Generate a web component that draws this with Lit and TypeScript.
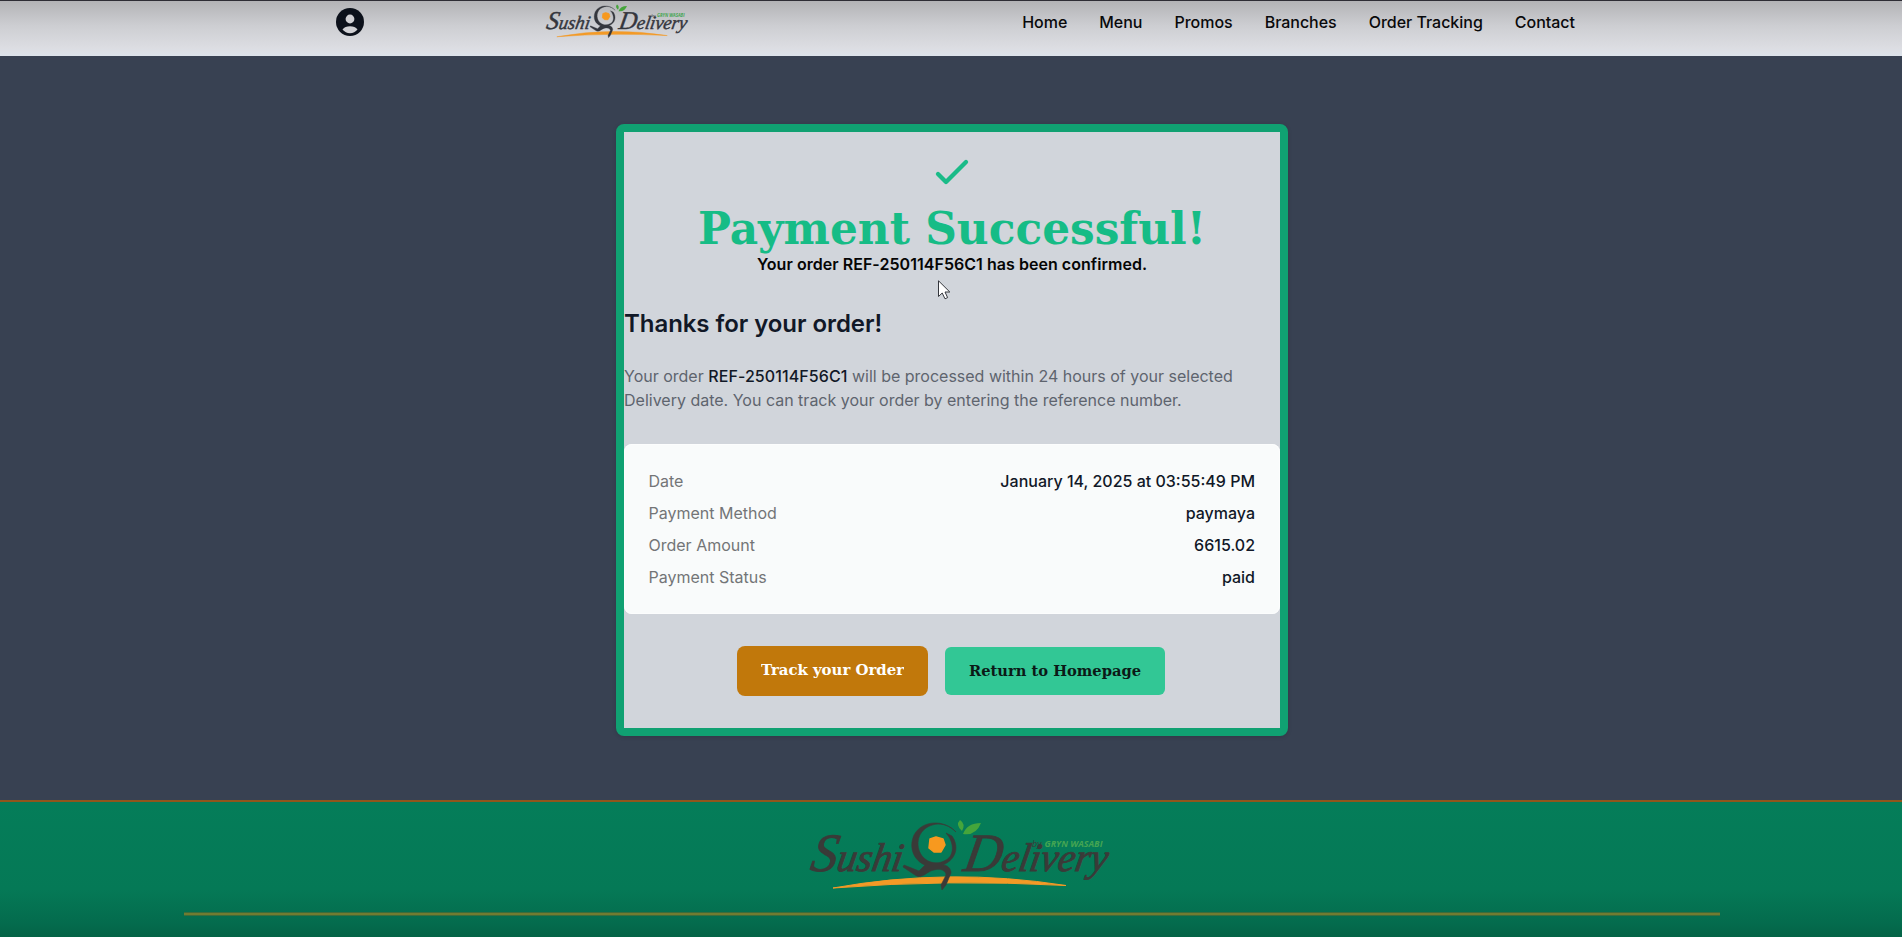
import { LitElement, html, css, svg } from "lit";
import { customElement, property } from "lit/decorators.js";

@customElement("sushi-logo")
class SushiLogo extends LitElement {
  @property() ink = "#3a3a38";
  static styles = css`
    :host { display: block; }
    svg { display: block; width: 100%; height: 100%; overflow: visible; }
    .script { font-family: "Liberation Serif", serif; font-style: italic; font-weight: 400; }
    .by { font-family: "Open Sans", sans-serif; font-style: italic; }
    .brand { font-weight: 700; }
  `;
  render() {
    return html`<svg viewBox="0 0 304 76">
      <path d="M24 67 Q140 46 257 64.500 Q140 58 24 67Z" fill="#f39a26" stroke="#f39a26" stroke-width="1"/>
      ${svg`<g fill=${this.ink} stroke=${this.ink}>
        <g transform="translate(0 50) skewX(-10)" stroke-width=".9">
          <text class="script" x="0" y="0" textLength="92" lengthAdjust="spacingAndGlyphs"><tspan font-size="54">S</tspan><tspan font-size="40">ushi</tspan></text>
          <text class="script" x="153" y="0" textLength="144" lengthAdjust="spacingAndGlyphs"><tspan font-size="54">D</tspan><tspan font-size="40">elivery</tspan></text>
        </g>
        <path d="M147 11 C135 -2 113 -1 105 14 C99 28 106 40 116 44 L110 50 L95 44 L94 46 L106 54 C113 59 118 50 125 49 C132 47 137 50 137 54 L132 64 L133 69 L137 64 L142 52 C142 47 138 44 134 44 C148 38 150 25 143 15 L137 12 C146 22 145 35 137 39 C125 46 113 39 110 29 C106 15 115 4 129 3 C137 3 143 7 147 11Z" stroke-width=".6"/>
      </g>`}
      <path d="M121 18 L127 16 L134 18 L136 24 L132 31 L125 31 L120 27Z" fill="#f7991f" stroke="#f7991f" stroke-width="1.5" stroke-linejoin="round"/>
      <path d="M153 10 Q146 4 151 -1 Q157 3 153 10Z M154 13 Q158 2 172 2 Q167 15 154 13Z" fill="#45a53b"/>
      <text class="by" x="223" y="25.5" font-size="9" fill=${this.ink}>by</text>
      <text class="by brand" x="235.500" y="25.500" font-size="9.300" fill="#44a552" textLength="58" lengthAdjust="spacingAndGlyphs">GRYN WASABI</text>
    </svg>`;
  }
}

@customElement("app-root")
class AppRoot extends LitElement {
  static styles = css`
    :host { display: flex; flex-direction: column; height: 937px; overflow: hidden; position: relative; background: #384152; font: 400 16px/24px Inter, sans-serif; color: #111827; }
    * { box-sizing: border-box; }
    header { height: 56px; flex: none; border-top: 1px solid #2e2d35; background: linear-gradient(#b3b3b6, #cdced2 45%, #dcdde2 85%, #dde3eb); display: flex; padding: 0 327px 0 336px; align-items: flex-start; }
    .user { width: 28px; height: 28px; margin-top: 7px; }
    .small { width: 145px; height: 36px; margin: 4px 0 0 181px; }
    nav { margin: 9px 0 0 auto; display: flex; gap: 32px; font-weight: 500; letter-spacing: -.02px; color: #09090b; white-space: nowrap; }
    main { height: 744px; flex: none; padding: 68px 0 0 616px; }
    .card { width: 672px; height: 612px; border: 8px solid #10a172; border-radius: 8px; background: #d1d5db; display: flex; flex-direction: column; box-shadow: 0 1px 4px #0002; }
    .check { width: 48px; height: 48px; margin: 16px auto 0; display: block; }
    h1 { margin: 8px 0 0; height: 48px; font: 700 45px/48px "DejaVu Serif Condensed", "DejaVu Serif", serif; color: #16bc86; text-align: center; white-space: nowrap; }
    h1 svg { display: block; margin: auto; overflow: visible; }
    .sub { margin: 0; text-align: center; font-weight: 600; letter-spacing: .04px; color: #050505; }
    h2 { margin: 32px 0 0; font: 600 24px/32px Inter, sans-serif; letter-spacing: -.06px; }
    .lead { margin: 24px 0 0; color: #5e646e; }
    .lead b { font-weight: 500; letter-spacing: .08px; color: #111827; }
    .details { margin: 32px 0 0; height: 170px; padding: 25px 25px 24px 24.5px; background: #f9fbfb; box-shadow: inset 0 0 0 1px #fcfdfd; border-radius: 8px; display: flex; flex-direction: column; gap: 8px; }
    .row { display: flex; justify-content: space-between; color: #737577; }
    .row b { font-weight: 500; color: #111827; }
    .actions { margin-top: 32px; display: flex; gap: 17px; align-items: center; padding-left: 113px; }
    .btn { border-radius: 8px; display: flex; align-items: center; justify-content: center; }
    .track { width: 191px; height: 50px; background: #c1780b; color: #fff; padding-bottom: 2px; }
    .home { width: 220px; height: 48px; background: #32c795; color: #0b1a17; border-radius: 6px; }
    .label { font-family: "DejaVu Serif Condensed", "DejaVu Serif", serif; font-weight: 700; }
    footer { flex: 1; border-top: 2px solid #91561c; background: linear-gradient(#057d59, #057956 65%, #046b4d 90%, #046346); padding: 19px 182px 0 184px; }
    .big { width: 304px; height: 76px; margin: 0 0 0 625px; }
    hr { border: 1px solid #3c6c3b; border-width: 1px 0; height: 4px; background: #707c31; margin: 15px 0 0; }
    .cursor { position: absolute; left: 938px; top: 280px; width: 13px; height: 20px; }
  `;
  private rows = [
    ["Date", "January 14, 2025 at 03:55:49 PM"],
    ["Payment Method", "paymaya"],
    ["Order Amount", "6615.02"],
    ["Payment Status", "paid"],
  ];
  render() {
    return html`
      <header>
        <svg class="user" viewBox="0 0 28 28"><circle cx="14" cy="14" r="14" fill="#0c111b"/><circle cx="14" cy="11" r="4.4" fill="#d0d0d4"/><path d="M6.5 21.5Q9 18.2 14 18.2T21.5 21.5Q18.5 25.2 14 25.2T6.5 21.5Z" fill="#d0d0d4"/></svg>
        <sushi-logo class="small" ink="#34363d"></sushi-logo>
        <nav>${["Home", "Menu", "Promos", "Branches", "Order Tracking", "Contact"].map((t) => html`<span>${t}</span>`)}</nav>
      </header>
      <main><section class="card">
        <svg class="check" viewBox="0 0 24 24" fill="none" stroke="#1abb88" stroke-width="2.15" stroke-linecap="round" stroke-linejoin="round"><path d="M5 13l4 4L19 7"/></svg>
        <h1><svg width="508" height="48"><text x="0" y="40" fill="#16bc86" textLength="508" lengthAdjust="spacingAndGlyphs">Payment Successful!</text></svg></h1>
        <p class="sub">Your order REF-250114F56C1 has been confirmed.</p>
        <h2>Thanks for your order!</h2>
        <p class="lead">Your order <b>REF-250114F56C1</b> will be processed within 24 hours of your selected Delivery date. You can track your order by entering the reference number.</p>
        <div class="details">${this.rows.map(([k, v]) => html`<div class="row"><span>${k}</span><b>${v}</b></div>`)}</div>
        <div class="actions">
          <div class="btn track"><svg width="143" height="24"><text class="label" x="0" y="17" font-size="15.5" fill="#fff" textLength="143" lengthAdjust="spacingAndGlyphs">Track your Order</text></svg></div>
          <div class="btn home"><svg width="172" height="24"><text class="label" x="0" y="17" font-size="15.5" fill="#0b1a17" textLength="172" lengthAdjust="spacingAndGlyphs">Return to Homepage</text></svg></div>
        </div>
      </section></main>
      <footer><sushi-logo class="big"></sushi-logo><hr></footer>
      <svg class="cursor" viewBox="0 0 13 20"><path d="M.5.8V16.5L4.2 13L7 18.8L9.6 17.6L7 12H11.8Z" fill="#fff" stroke="#34363c"/></svg>`;
  }
}
